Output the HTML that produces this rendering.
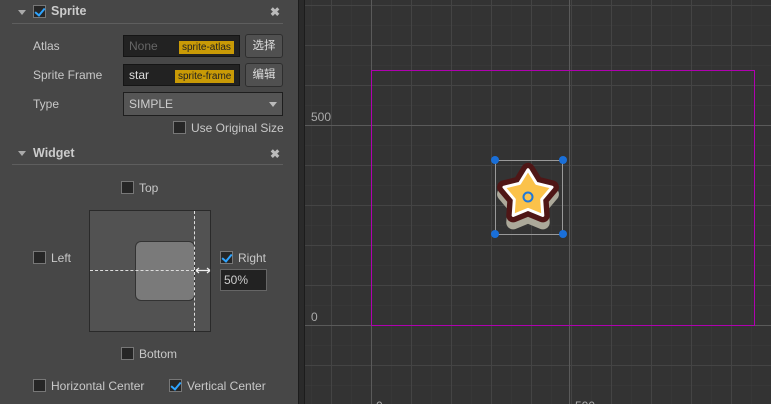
<!DOCTYPE html>
<html><head><meta charset="utf-8"><style>
*{box-sizing:border-box;margin:0;padding:0}
body{width:771px;height:404px;overflow:hidden;background:#333;font-family:"Liberation Sans","Noto Sans CJK SC",sans-serif;font-size:12px;color:#c8c8c8;position:relative}
.panel{position:absolute;left:0;top:0;width:298px;height:404px;background:#474747}
.abs{position:absolute}
.hdr{font-weight:bold;font-size:12.5px;color:#ccc}
.line{position:absolute;left:12px;width:271px;height:1px;background:#5e5e5e}
.cb{position:absolute;width:13px;height:13px;background:#262626;border:1px solid #777}
.cb.on::after{content:"";position:absolute;left:3px;top:0px;width:4px;height:8px;border:solid #2ea4ff;border-width:0 2px 2px 0;transform:rotate(40deg)}
.inp{position:absolute;background:#222;border:1px solid #151515;height:22px}
.tag{position:absolute;background:#c99a06;color:#222;font-size:10px;height:13px;line-height:13px;padding:0 3px}
.btn{position:absolute;background:#505050;border:1px solid #2e2e2e;border-radius:3px;height:24px;width:38px;text-align:center;line-height:22px;color:#ddd;font-size:11.5px}
.tri{position:absolute;width:0;height:0;border-left:4px solid transparent;border-right:4px solid transparent;border-top:5px solid #aaa}
.x{position:absolute;font-weight:bold;color:#bbb;font-size:12px}
</style></head><body>
<div class="panel">
 <div class="tri" style="left:18px;top:10px"></div>
 <div class="cb on" style="left:33px;top:5px"></div>
 <div class="abs hdr" style="left:51px;top:4px">Sprite</div>
 <div class="x" style="left:270px;top:5px">✖</div>
 <div class="line" style="top:23px"></div>
 <div class="abs" style="left:33px;top:39px">Atlas</div>
 <div class="inp" style="left:123px;top:35px;width:117px"><span class="abs" style="left:5px;top:3px;color:#666">None</span><div class="tag" style="left:55px;top:5px">sprite-atlas</div></div>
 <div class="btn" style="left:245px;top:34px">选择</div>
 <div class="abs" style="left:33px;top:68px">Sprite Frame</div>
 <div class="inp" style="left:123px;top:64px;width:117px"><span class="abs" style="left:5px;top:3px;color:#ddd">star</span><div class="tag" style="left:51px;top:5px">sprite-frame</div></div>
 <div class="btn" style="left:245px;top:63px">编辑</div>
 <div class="abs" style="left:33px;top:97px">Type</div>
 <div class="abs" style="left:123px;top:92px;width:160px;height:24px;background:#555;border:1px solid #1e1e1e"><span class="abs" style="left:5px;top:4px;color:#ccc">SIMPLE</span><div class="tri" style="left:145px;top:9px;border-top-color:#bbb"></div></div>
 <div class="cb" style="left:173px;top:121px"></div>
 <div class="abs" style="left:191px;top:121px">Use Original Size</div>
 <div class="tri" style="left:18px;top:151px"></div>
 <div class="abs hdr" style="left:33px;top:146px">Widget</div>
 <div class="x" style="left:270px;top:147px">✖</div>
 <div class="line" style="top:164px"></div>
 <div class="cb" style="left:121px;top:181px"></div>
 <div class="abs" style="left:139px;top:181px">Top</div>
 <div class="abs" style="left:89px;top:210px;width:122px;height:122px;background:#525252;border:1px solid #2a2a2a"></div>
 <div class="abs" style="left:135px;top:241px;width:60px;height:60px;background:#7a7a7a;border:1px solid #333;border-radius:6px"></div>
 <div class="abs" style="left:90px;top:270px;width:104px;border-top:1px dashed #ddd"></div>
 <div class="abs" style="left:194px;top:211px;height:120px;border-left:1px dashed #ddd"></div>
 <svg class="abs" style="left:195px;top:266px" width="16" height="9"><path d="M1 4.5H15M1 4.5L4 2M1 4.5L4 7M15 4.5L12 2M15 4.5L12 7" stroke="#eee" stroke-width="1.2" fill="none"/></svg>
 <div class="cb" style="left:33px;top:251px"></div>
 <div class="abs" style="left:51px;top:251px">Left</div>
 <div class="cb on" style="left:220px;top:251px"></div>
 <div class="abs" style="left:238px;top:251px">Right</div>
 <div class="abs" style="left:220px;top:269px;width:47px;height:22px;background:#222;border:1px solid #666"><span class="abs" style="left:3px;top:3px;color:#ccc">50%</span></div>
 <div class="cb" style="left:121px;top:347px"></div>
 <div class="abs" style="left:139px;top:347px">Bottom</div>
 <div class="cb" style="left:33px;top:379px"></div>
 <div class="abs" style="left:51px;top:379px">Horizontal Center</div>
 <div class="cb on" style="left:169px;top:379px"></div>
 <div class="abs" style="left:187px;top:379px">Vertical Center</div>
</div>
<div class="abs" style="left:298px;top:0;width:7px;height:404px;background:#2a2a2a;border-left:1px solid #1c1c1c;border-right:1px solid #1c1c1c"></div>
<svg class="abs" style="left:0;top:0" width="771" height="404">
 <defs>
  <pattern id="g1" x="11" y="5" width="20" height="20" patternUnits="userSpaceOnUse"><path d="M0 0H20M0 0V20" stroke="#3b3b3b" stroke-width="1" fill="none"/></pattern>
  <pattern id="g2" x="11" y="5" width="40" height="40" patternUnits="userSpaceOnUse"><path d="M0.5 0V40M0 0.5H40" stroke="#444" stroke-width="1" fill="none"/></pattern>
  <path id="st" d="M0,-22 L7.35,-10.1 L20.9,-6.8 L11.9,3.86 L12.9,17.8 L0,12.5 L-12.9,17.8 L-11.9,3.86 L-20.9,-6.8 L-7.35,-10.1Z"/>
 </defs>
 <rect x="305" y="0" width="466" height="404" fill="#333"/>
 <rect x="305" y="0" width="466" height="404" fill="url(#g1)"/>
 <rect x="305" y="0" width="466" height="404" fill="url(#g2)"/>
 <path d="M371.5 0V404M569.5 0V404M305 125.5H771M305 325.5H771" stroke="#5a5a5a"/>
 <rect x="371.5" y="70.5" width="383" height="255" fill="none" stroke="#b000b0"/>
 <text x="311" y="121" fill="#aaa" font-size="12" font-family="Liberation Sans">500</text>
 <text x="311" y="321" fill="#aaa" font-size="12" font-family="Liberation Sans">0</text>
 <text x="376" y="410" fill="#aaa" font-size="12" font-family="Liberation Sans">0</text>
 <text x="575" y="410" fill="#aaa" font-size="12" font-family="Liberation Sans">500</text>
 <g transform="translate(528,202) scale(1.15)"><use href="#st" fill="#aca99a" stroke="#aca99a" stroke-width="12" stroke-linejoin="round"/></g>
 <g transform="translate(528,195) scale(1.15)">
  <use href="#st" fill="#4f1616" stroke="#4f1616" stroke-width="12" stroke-linejoin="round"/>
  <use href="#st" fill="#fbc24a" stroke="#fff" stroke-width="2.6" stroke-linejoin="round"/>
 </g>
 <circle cx="528" cy="197" r="4.5" fill="none" stroke="#1f78d8" stroke-width="2"/>
 <rect x="495.5" y="160.5" width="67" height="74" fill="none" stroke="#999"/>
 <g fill="#1a6fd8"><circle cx="495" cy="160" r="4"/><circle cx="563" cy="160" r="4"/><circle cx="495" cy="234" r="4"/><circle cx="563" cy="234" r="4"/></g>
</svg>
</body></html>
